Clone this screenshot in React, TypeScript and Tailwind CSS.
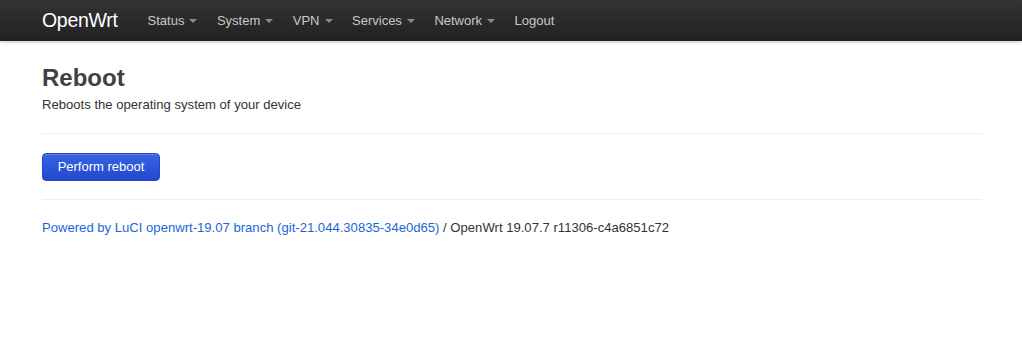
import React from 'react';

const menus = ['Status', 'System', 'VPN', 'Services', 'Network'];

const Caret = () => (
  <span className="ml-[5px] inline-block h-0 w-0 border-x-[4px] border-t-[4px] border-x-transparent border-t-[#8a8a8a] align-middle" />
);

export default function App() {
  return (
    <div className="min-h-[343px] bg-white font-['Liberation_Sans',Arial,sans-serif]">
      {/* barre de navigation */}
      <div className="h-[41px] bg-gradient-to-b from-[#333333] to-[#222222] shadow-[0_1px_3px_rgba(0,0,0,0.25)]">
        <div className="flex h-full items-center px-[42px]">
          <span className="mr-[30px] text-[19.5px] tracking-[-0.3px] text-white">OpenWrt</span>
          {menus.map((m) => (
            <span key={m} className="mr-[19.5px] flex items-center text-[13px] text-[#c8c8c8]">
              {m}
              <Caret />
            </span>
          ))}
          <span className="text-[13px] text-[#c8c8c8]">Logout</span>
        </div>
      </div>

      <div className="px-[42px] pr-[40px]">
        <h2 className="mt-[22px] text-[24px] font-bold leading-[30px] text-[#404040]">Reboot</h2>
        <p className="mt-[3px] text-[13.1px] leading-[18px] text-[#333]">Reboots the operating system of your device</p>
        <div className="mt-[19px] border-t border-[#eeeeee]" />
        <button className="mt-[19px] h-[28px] w-[118px] rounded-[4px] border border-[#2448c8] bg-gradient-to-b from-[#3765e0] to-[#2346d1] text-[13px] text-white shadow-[inset_0_1px_0_rgba(255,255,255,0.2)]">
          Perform reboot
        </button>
        <div className="mt-[18px] border-t border-[#eeeeee]" />
        <p className="mt-[19px] text-[13.1px] leading-[18px] text-[#333]">
          <span className="text-[#1a66d6]">Powered by LuCI openwrt-19.07 branch (git-21.044.30835-34e0d65)</span> / OpenWrt 19.07.7 r11306-c4a6851c72
        </p>
      </div>
    </div>
  );
}
